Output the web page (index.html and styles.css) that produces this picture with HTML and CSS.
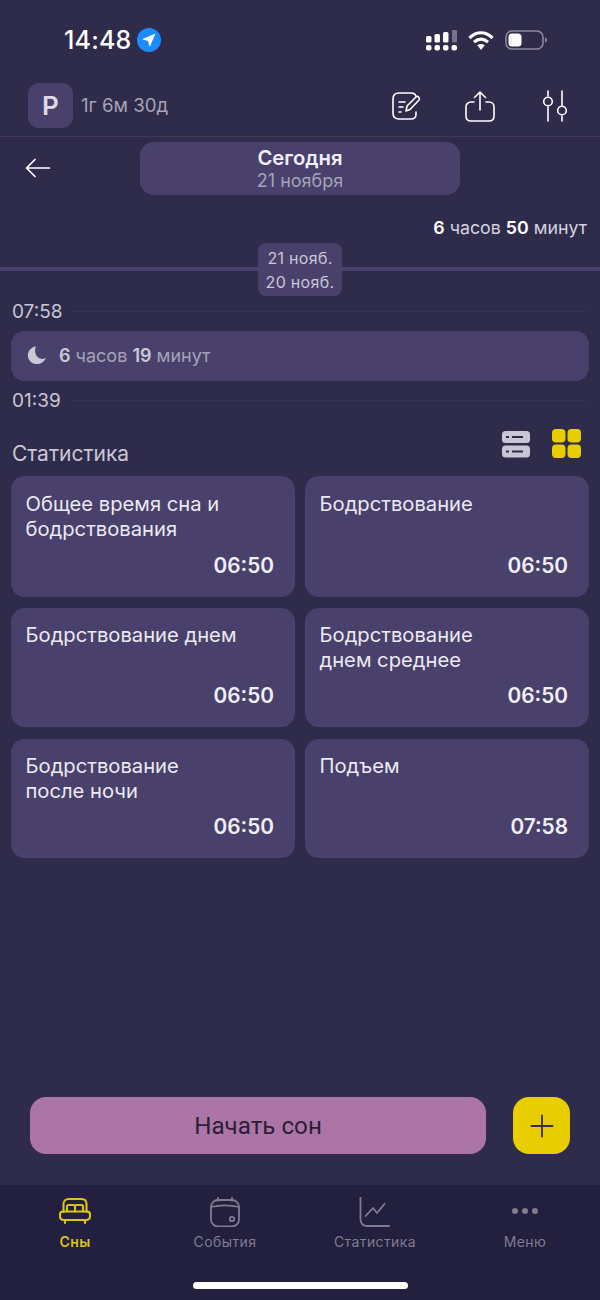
FILE: index.html
```html
<!DOCTYPE html>
<html lang="ru">
<head>
<meta charset="utf-8">
<title>Сны</title>
<link rel="stylesheet" href="styles.css">
</head>
<body>
<div class="screen">
  <div class="status">
    <div class="status-left">
      <span class="clock">14:48</span>
      <svg class="loc" width="26" height="26" viewBox="0 0 26 26"><circle cx="13" cy="13" r="12" fill="#1a8cff"/><path d="M19.500 6.500L6 12.300l6 1.600 1.800 6z" fill="#fff"/></svg>
    </div>
    <div class="status-right">
      <svg width="31" height="22" viewBox="0 0 31 22"><g fill="#fff"><rect x="0" y="7" width="5.500" height="6.500" rx="1.500"/><rect x="8.500" y="5" width="5.500" height="8.500" rx="1.500"/><rect x="17" y="3" width="5.500" height="10.500" rx="1.500"/><rect x="26" y="1" width="5" height="12.500" rx="1" fill="#77738c"/><rect x="0" y="16" width="5.500" height="5.500" rx="2"/><rect x="8.500" y="16" width="5.500" height="5.500" rx="2"/><rect x="17" y="16" width="5.500" height="5.500" rx="2"/><rect x="25.500" y="16" width="5.500" height="5.500" rx="2"/></g></svg>
      <svg width="28" height="21" viewBox="0 0 26 20"><g fill="none" stroke="#fff" stroke-width="3"><path d="M2 7.600C9 1.200 17 1.200 24 7.600"/><path d="M6.300 11.600c4.300-3.700 9.100-3.700 13.400 0"/></g><path d="M9.400 14.600c2.400-1.700 4.800-1.700 7.200 0L13 19z" fill="#fff"/></svg>
      <svg width="42" height="20" viewBox="0 0 42 20"><rect x="1" y="1" width="37" height="18" rx="6" fill="none" stroke="#8b88a0" stroke-width="1.600"/><rect x="3.500" y="3.500" width="13" height="13" rx="3.500" fill="#fff"/><path d="M40 7.500c1.500.5 2 1.500 2 2.500s-.5 2-2 2.500z" fill="#8b88a0"/></svg>
    </div>
  </div>

  <header class="topbar">
    <div class="profile">
      <div class="avatar">P</div>
      <span class="age">1г 6м 30д</span>
    </div>
    <div class="actions">
      <svg width="32" height="32" viewBox="0 0 32 32" fill="none" stroke="#fff" stroke-width="1.600" stroke-linecap="round" stroke-linejoin="round"><path d="M26 6.500C25.500 4 24 3 21 3H9C5 3 3 5 3 9v14c0 4 2 6 6 6h12c3 0 5-2 5-5v-2"/><path d="M9 12h6M9 17h4M9 22h2"/><path d="M16 21l1-5 9-9c1.500-1.500 4.500 1 3 3l-9 9.500z"/></svg>
      <svg class="share" width="30" height="32" viewBox="0 0 30 32" fill="none" stroke="#fff" stroke-width="1.600" stroke-linecap="round" stroke-linejoin="round"><path d="M15 20V2M9.500 7.500L15 2l5.500 5.500"/><path d="M9 12H6c-2.800 0-5 2-5 5v9c0 3 2 5 5 5h18c3 0 5-2 5-5v-9c0-3-2.200-5-5-5h-3"/></svg>
      <svg class="sliders" width="26" height="32" viewBox="0 0 26 32" fill="none" stroke="#fff" stroke-width="1.600" stroke-linecap="round"><path d="M6 1v5M6 17v14M20 1v14M20 26v5"/><circle cx="6" cy="11.500" r="4.300"/><circle cx="20" cy="20.500" r="4.300"/></svg>
    </div>
  </header>

  <div class="daterow">
    <svg class="back" width="26" height="20" viewBox="0 0 26 20" fill="none" stroke="#fff" stroke-width="1.700" stroke-linecap="round" stroke-linejoin="round"><path d="M24.500 10H1.500M10 1.500L1.500 10 10 18.500"/></svg>
    <div class="datepill">
      <div class="today">Сегодня</div>
      <div class="date">21 ноября</div>
    </div>
  </div>

  <div class="total"><b>6</b> часов <b>50</b> минут</div>

  <div class="daysplit">
    <div class="chip"><span>21 нояб.</span><span>20 нояб.</span></div>
  </div>

  <div class="timeline">
    <span class="tl-time">07:58</span>
  </div>
  <div class="sleep">
    <svg width="20" height="20" viewBox="0 0 22 22"><path d="M10 1.500C5 2.300 1 6.300 1 11.500 1 17 5.500 21 11 21c4.500 0 8.500-3 10-7-2 1.300-3.800 1.500-5.500 1.200C10.500 14.500 7 8 10 1.500z" fill="#c9c6d6"/></svg>
    <span><b>6</b> часов <b>19</b> минут</span>
  </div>
  <div class="timeline timeline-end">
    <span class="tl-time">01:39</span>
  </div>

  <div class="stats-head">
    <span class="stats-title">Статистика</span>
    <div class="views">
      <svg width="28" height="28" viewBox="0 0 28 28"><rect x="0" y="1" width="28" height="12" rx="3.500" fill="#c9c6d6"/><rect x="0" y="15.500" width="28" height="12" rx="3.500" fill="#c9c6d6"/><path d="M4 7h3M10 7h11M4 21.500h3M10 21.500h11" stroke="#2f2b4b" stroke-width="1.800"/></svg>
      <svg width="29" height="29" viewBox="0 0 29 29" fill="#e8cd00"><rect x="0" y="0" width="13.500" height="13.500" rx="4"/><rect x="15.500" y="0" width="13.500" height="13.500" rx="4"/><rect x="0" y="15.500" width="13.500" height="13.500" rx="4"/><rect x="15.500" y="15.500" width="13.500" height="13.500" rx="4"/></svg>
    </div>
  </div>

  <div class="grid">
    <div class="card card-tall"><div class="card-title">Общее время сна и бодрствования</div><div class="card-val">06:50</div></div>
    <div class="card card-tall"><div class="card-title">Бодрствование</div><div class="card-val">06:50</div></div>
    <div class="card"><div class="card-title">Бодрствование днем</div><div class="card-val">06:50</div></div>
    <div class="card"><div class="card-title">Бодрствование<br>днем среднее</div><div class="card-val">06:50</div></div>
    <div class="card"><div class="card-title">Бодрствование<br>после ночи</div><div class="card-val">06:50</div></div>
    <div class="card"><div class="card-title">Подъем</div><div class="card-val">07:58</div></div>
  </div>

  <div class="spacer"></div>

  <div class="cta">
    <button class="start">Начать сон</button>
    <button class="plus" aria-label="Добавить"><svg width="24" height="24" viewBox="0 0 24 24" stroke="#3a2c3c" stroke-width="1.800" stroke-linecap="round"><path d="M12 1.500v21M1.500 12h21"/></svg></button>
  </div>

  <nav class="tabbar">
    <div class="tabs">
      <div class="tab tab-active">
        <svg width="32" height="30" viewBox="0 0 32 30" fill="none" stroke="#dcc31a" stroke-width="2.100" stroke-linecap="round" stroke-linejoin="round"><path d="M4.500 15V7c0-3 2-5 5-5h13c3 0 5 2 5 5v8"/><path d="M8 14.500V9.500C8 8.500 8.500 8 9.500 8h5c1 0 1.500.5 1.500 1.500v5M16 14.500V9.500c0-1 .5-1.500 1.500-1.500h5c1 0 1.500.5 1.500 1.500v5"/><path d="M4 14.500h24c2 0 3 1 3 3v2c0 2.500-1.500 3.500-4 3.500H5c-2.500 0-4-1-4-3.500v-2c0-2 1-3 3-3z"/><path d="M6 23v3M26 23v3"/></svg>
        <span>Сны</span>
      </div>
      <div class="tab">
        <svg width="32" height="30" viewBox="0 0 32 30" fill="none" stroke="#7f7c8f" stroke-width="1.800" stroke-linecap="round"><rect x="2" y="3" width="28" height="26.500" rx="7"/><path d="M2 10c8-2 20-2 28 0M9 0.800v3M23 0.800v3"/><circle cx="23" cy="22" r="2.200"/></svg>
        <span>События</span>
      </div>
      <div class="tab">
        <svg width="32" height="30" viewBox="0 0 32 30" fill="none" stroke="#7f7c8f" stroke-width="1.800" stroke-linecap="round" stroke-linejoin="round"><path d="M1.500 0v22c0 4 2 7 7 7H30"/><path d="M6.500 19l7.500-8 4 5 7.500-9"/></svg>
        <span>Статистика</span>
      </div>
      <div class="tab">
        <svg width="32" height="30" viewBox="0 0 32 30" fill="#7f7c8f"><circle cx="6" cy="14" r="3"/><circle cx="16" cy="14" r="3"/><circle cx="26" cy="14" r="3"/></svg>
        <span>Меню</span>
      </div>
    </div>
    <div class="home"></div>
  </nav>
</div>
</body>
</html>
```
FILE: styles.css
```css
* { box-sizing: border-box; }
html, body { margin: 0; padding: 0; }
body { font-family: Inter, Roboto, "Noto Sans", sans-serif; color: #fff; background: #2f2b4b; }
b { font-weight: 600; }
.screen { width: 600px; height: 1300px; display: flex; flex-direction: column; overflow: hidden; background: #2f2b4b; }

.status { height: 70px; padding: 10px 53px 0 64px; display: flex; justify-content: space-between; align-items: center; flex-shrink: 0; }
.status-left { display: flex; align-items: center; gap: 4px; }
.clock { font-size: 25px; font-weight: 500; letter-spacing: 0.2px; font-family: Inter, sans-serif; }
.status-right { display: flex; align-items: center; gap: 10px; }

.topbar { height: 67px; padding: 13px 32px 8px 28px; border-bottom: 1px solid #3f3a5c; display: flex; justify-content: space-between; align-items: center; flex-shrink: 0; }
.profile { display: flex; align-items: center; gap: 8px; }
.avatar { width: 45px; height: 45px; border-radius: 11px; background: #49406b; display: flex; align-items: center; justify-content: center; font-size: 26px; font-weight: 600; color: #ddd9e6; }
.age { font-size: 18.700px; color: #a6a2b8; }
.actions { display: flex; align-items: center; gap: 43px; }
.sliders { margin-left: 4px; }

.daterow { margin-top: 5px; display: flex; justify-content: center; position: relative; flex-shrink: 0; }
.back { position: absolute; left: 25px; top: 16px; }
.datepill { width: 320px; height: 53px; border-radius: 14px; background: #49406b; text-align: center; padding-top: 4px; }
.today { font-size: 20.300px; line-height: 23px; font-weight: 600; color: #f1eff6; }
.date { font-size: 18px; line-height: 21px; margin-top: 1px; color: #a6a2b8; }

.total { margin-top: 22px; padding-right: 13px; text-align: right; font-size: 17.800px; line-height: 22px; color: #d5d2e0; flex-shrink: 0; }
.total b { color: #fff; }

.daysplit { margin-top: 4px; height: 53px; display: flex; justify-content: center; position: relative; flex-shrink: 0; background: linear-gradient(#49406b, #49406b) 0 24px / 100% 4px no-repeat; }
.chip { width: 84px; height: 53px; border-radius: 8px; background: #49406b; display: flex; flex-direction: column; align-items: center; font-size: 16px; line-height: 24px; letter-spacing: 0.3px; color: #c9c6d6; padding-top: 3px; }

.timeline { margin-top: 5px; padding: 0 11px 0 12px; display: flex; align-items: center; gap: 8px; height: 20px; flex-shrink: 0; }
.timeline::after { content: ""; flex: 1; height: 1px; background: #353152; }
.timeline-end { margin-top: 9px; }
.tl-time { font-size: 19px; line-height: 20px; padding-top: 2px; color: #c9c6d6; }

.sleep { margin: 10px 11px 0; height: 50px; border-radius: 14px; background: #49406b; display: flex; align-items: center; gap: 12px; padding: 0 0 2px 16px; font-size: 18px; color: #a6a2b8; flex-shrink: 0; }
.sleep b { color: #c9c6d6; }

.stats-head { margin-top: 19px; height: 35px; padding: 0 19px 0 12px; display: flex; justify-content: space-between; align-items: flex-end; flex-shrink: 0; }
.stats-title { font-size: 21px; line-height: 26px; color: #c9c6d6; margin-bottom: -3px; }
.views { display: flex; align-items: center; gap: 22px; margin-bottom: 6px; }

.grid { margin-top: 12px; padding: 0 11px; display: grid; grid-template-columns: 1fr 1fr; grid-template-rows: 121px 120px 119px; gap: 11px 10px; flex-shrink: 0; }
.card { height: 119px; align-self: start; border-radius: 14px; background: #49406b; padding: 14px 21px 18px 14.500px; display: flex; flex-direction: column; justify-content: space-between; }
.card-tall { height: 121px; padding-top: 15px; }
.card-title { font-size: 20.200px; line-height: 25px; color: #ece9f2; }
.card-val { text-align: right; font-size: 20.800px; line-height: 26px; font-weight: 600; color: #f1eff6; }

.spacer { flex: 1; }

.cta { padding: 0 30px 30px; display: flex; justify-content: space-between; flex-shrink: 0; }
.start { width: 456px; height: 57px; border: 0; border-radius: 16px; background: #ab75a8; color: #2c1e35; font: 400 24.200px Roboto, sans-serif; }
.plus { width: 57px; height: 57px; border: 0; border-radius: 16px; background: #e8cd00; display: flex; align-items: center; justify-content: center; padding: 0; }

.tabbar { height: 116px; background: #221f3f; border-top: 1px solid #2b2848; flex-shrink: 0; display: flex; flex-direction: column; align-items: center; padding-top: 12px; }
.tabs { width: 100%; display: grid; grid-template-columns: repeat(4, 150px); }
.tab { display: flex; flex-direction: column; align-items: center; gap: 6px; color: #7f7c8f; font-size: 14px; line-height: 17px; letter-spacing: 0.4px; }
.tab-active { color: #dcc31a; font-weight: 600; }
.home { width: 215px; height: 7px; border-radius: 4px; background: #fff; margin-top: 32px; }
```
